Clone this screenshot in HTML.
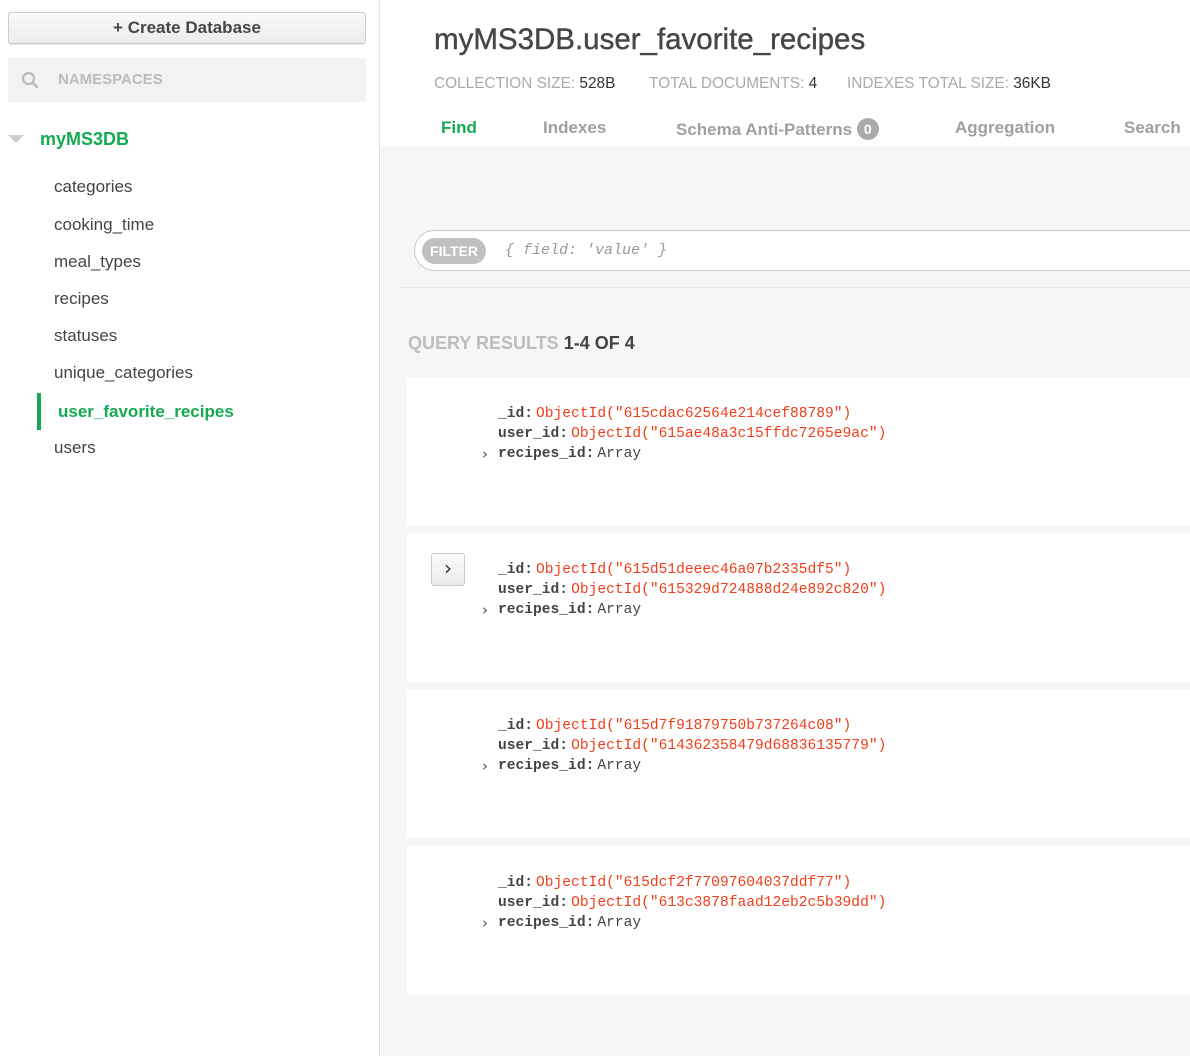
<!DOCTYPE html>
<html><head><meta charset="utf-8"><style>
*{box-sizing:border-box;margin:0;padding:0}
body{width:1190px;height:1056px;overflow:hidden;font-family:"Liberation Sans",sans-serif;background:#fff;position:relative}
.side{position:absolute;left:0;top:0;width:380px;height:1056px;background:#fff;border-right:1px solid #e4e4e4}
.btn{position:absolute;left:8px;top:12px;width:358px;height:32px;border:1px solid #ccc;border-radius:3px;background:linear-gradient(#fafafa,#ececec);font-size:17px;font-weight:bold;color:#464646;text-align:center;line-height:30px;box-shadow:0 1px 1px rgba(0,0,0,.1)}
.ns{position:absolute;left:8px;top:58px;width:358px;height:44px;background:#f2f2f2;color:#bbb;font-size:15px;font-weight:bold;line-height:44px;padding-left:50px}
.db{position:absolute;left:40px;top:129px;color:#13aa52;font-weight:bold;font-size:18px}
.tri{position:absolute;left:8px;top:135px;width:0;height:0;border-left:8px solid transparent;border-right:8px solid transparent;border-top:8px solid #ccc}
.item{position:absolute;left:54px;font-size:17px;color:#444}
.act{left:58px;color:#13aa52;font-weight:bold}
.bar{position:absolute;left:37px;top:393px;width:4px;height:37px;background:#13aa52}
.main{position:absolute;left:381px;top:0;width:809px;height:1056px;background:#f5f6f7}
.hdr{position:absolute;left:0;top:0;width:809px;height:146px;background:#fff}
h1{position:absolute;left:53px;top:23px;font-size:29.5px;font-weight:normal;color:#464646;-webkit-text-stroke:.4px #464646}
.st{position:absolute;top:75px;font-size:15.4px;color:#aaa;white-space:nowrap}
.st b{font-weight:normal;color:#333}
.tabs{position:absolute;top:118px;font-size:17px;font-weight:bold;color:#a0a0a0}
.badge{display:inline-block;width:22px;height:22px;border-radius:11px;background:#aaa;color:#fff;font-size:14px;text-align:center;line-height:22px;vertical-align:1px}
.fz{position:absolute;left:19px;top:220px;width:790px;height:68px;border-bottom:1px solid #e6e6e6}
.fil{position:absolute;left:14px;top:10px;width:800px;height:41px;border:1px solid #c8c8c8;border-radius:21px;background:#fff}
.fb{position:absolute;left:7px;top:7px;width:64px;height:26px;border-radius:13px;background:#c0c0c0;color:#fff;font-weight:bold;font-size:14px;line-height:26px;text-align:center}
.fp{position:absolute;left:90px;top:11px;font-family:"Liberation Mono",monospace;font-style:italic;font-size:15px;color:#999}
.qr{position:absolute;left:27px;top:333px;font-size:18px;font-weight:bold;color:#bdbdbd}
.qr b{color:#444}
.card{position:absolute;left:26px;width:790px;height:149px;background:#fff}
.doc{position:absolute;left:91px;top:27px;font-family:"Liberation Mono","DejaVu Sans Mono",monospace;font-size:14.6px;line-height:20px;color:#444;white-space:pre}
.k{font-weight:bold;color:#444;margin-right:3px}
.r{color:#f03e1a}
.ar{position:absolute;left:-16px;font-size:15px;font-family:"DejaVu Sans",sans-serif;color:#555}
.exp{position:absolute;left:24px;top:20px;width:34px;height:33px;border:1px solid #ccc;border-radius:3px;background:linear-gradient(#fafafa,#ececec);text-align:center;line-height:29px;font-size:20px;color:#333;font-family:"DejaVu Sans",sans-serif}
</style></head><body>
<div class="side">
<div class="btn">+ Create Database</div>
<div class="ns"><svg style="position:absolute;left:13px;top:13px" width="18" height="18" viewBox="0 0 18 18"><circle cx="7.5" cy="7.5" r="5.5" fill="none" stroke="#bbb" stroke-width="2.2"/><path d="M11.5 11.5L16 16" stroke="#bbb" stroke-width="2.6" stroke-linecap="round"/></svg>NAMESPACES</div>
<div class="tri"></div><div class="db">myMS3DB</div>
<div class="item" style="top:177px">categories</div>
<div class="item" style="top:215px">cooking_time</div>
<div class="item" style="top:252px">meal_types</div>
<div class="item" style="top:289px">recipes</div>
<div class="item" style="top:326px">statuses</div>
<div class="item" style="top:363px">unique_categories</div>
<div class="bar"></div>
<div class="item act" style="top:402px">user_favorite_recipes</div>
<div class="item" style="top:438px">users</div>
</div>
<div class="main">
<div class="hdr">
<h1>myMS3DB.user_favorite_recipes</h1>
<div class="st" style="left:53px">COLLECTION SIZE: <b>528B</b></div>
<div class="st" style="left:268px">TOTAL DOCUMENTS: <b>4</b></div>
<div class="st" style="left:466px">INDEXES TOTAL SIZE: <b>36KB</b></div>
<div class="tabs" style="left:60px;color:#13aa52">Find</div>
<div class="tabs" style="left:162px">Indexes</div>
<div class="tabs" style="left:295px">Schema Anti-Patterns <span class="badge">0</span></div>
<div class="tabs" style="left:574px">Aggregation</div>
<div class="tabs" style="left:743px">Search</div>
</div>
<div class="fz"><div class="fil"><div class="fb">FILTER</div><div class="fp">{ field: 'value' }</div></div></div>
<div class="qr">QUERY RESULTS <b>1-4 OF 4</b></div>
<div class="card" style="top:377px"><div class="doc"><span class="k">_id:</span><span class="r">ObjectId("615cdac62564e214cef88789")</span>
<span class="k">user_id:</span><span class="r">ObjectId("615ae48a3c15ffdc7265e9ac")</span>
<span class="ar">›</span><span class="k">recipes_id:</span>Array</div></div>
<div class="card" style="top:533px"><div class="exp">›</div><div class="doc"><span class="k">_id:</span><span class="r">ObjectId("615d51deeec46a07b2335df5")</span>
<span class="k">user_id:</span><span class="r">ObjectId("615329d724888d24e892c820")</span>
<span class="ar">›</span><span class="k">recipes_id:</span>Array</div></div>
<div class="card" style="top:689px"><div class="doc"><span class="k">_id:</span><span class="r">ObjectId("615d7f91879750b737264c08")</span>
<span class="k">user_id:</span><span class="r">ObjectId("614362358479d68836135779")</span>
<span class="ar">›</span><span class="k">recipes_id:</span>Array</div></div>
<div class="card" style="top:846px"><div class="doc"><span class="k">_id:</span><span class="r">ObjectId("615dcf2f77097604037ddf77")</span>
<span class="k">user_id:</span><span class="r">ObjectId("613c3878faad12eb2c5b39dd")</span>
<span class="ar">›</span><span class="k">recipes_id:</span>Array</div></div>
</div>
</body></html>
